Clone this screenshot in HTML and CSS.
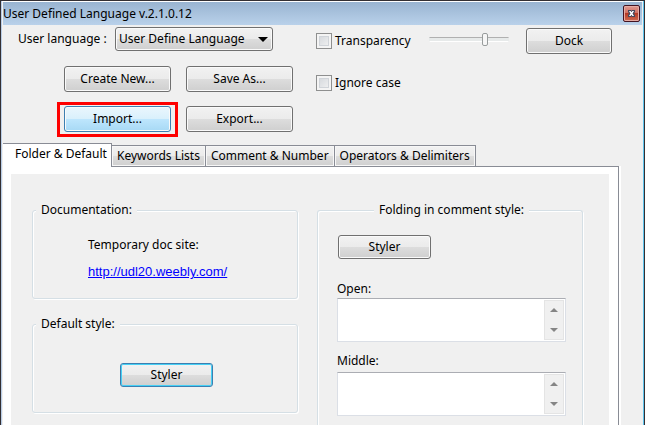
FILE: index.html
```html
<!DOCTYPE html>
<html lang="en">
<head>
<meta charset="utf-8">
<title>User Defined Language v.2.1.0.12</title>
<link rel="stylesheet" href="styles.css">
</head>
<body>
<div class="window">
  <header class="titlebar">
    <h1>User Defined Language v.2.1.0.12</h1>
    <button class="close" type="button" aria-label="Close">
      <svg width="7" height="7" viewBox="0 0 7 7"><path d="M0 0h3l.5 1L4 0h3v2L6 3.500 7 5v2H4l-.5-1L3 7H0V5l1-1.500L0 2z" fill="#45485c"/><path d="M1 1h1.600l.9 1.300L4.400 1H6L4.500 3.500 6 6H4.400L3.500 4.700 2.600 6H1l1.500-2.500z" fill="#fff"/></svg>
    </button>
  </header>

  <section class="toolbar">
    <div class="language">
      <div class="language-pick">
        <label for="lang">User language :</label>
        <div class="select-wrap">
          <select id="lang"><option>User Define Language</option></select>
          <svg class="caret" width="10" height="5" viewBox="0 0 10 5"><path d="M0 0h10L5 5z" fill="#000"/></svg>
        </div>
      </div>
      <div class="actions">
        <button class="btn" type="button">Create New...</button>
        <button class="btn" type="button">Save As...</button>
        <div class="marked"><button class="btn btn-hot" type="button">Import...</button></div>
        <button class="btn" type="button">Export...</button>
      </div>
    </div>
    <div class="checks">
      <label><input type="checkbox">Transparency</label>
      <label><input type="checkbox">Ignore case</label>
    </div>
    <input class="slider" type="range" min="0" max="100" value="72" aria-label="Transparency level">
    <button class="btn dock" type="button">Dock</button>
  </section>

  <nav class="tabs" role="tablist">
    <button class="tab tab-active" type="button" role="tab" aria-selected="true">Folder &amp; Default</button>
    <button class="tab" type="button" role="tab">Keywords Lists</button>
    <button class="tab" type="button" role="tab">Comment &amp; Number</button>
    <button class="tab" type="button" role="tab">Operators &amp; Delimiters</button>
  </nav>

  <main class="panel">
    <div class="page">
      <div class="column">
        <fieldset class="docs">
          <legend>Documentation:</legend>
          <p>Temporary doc site:</p>
          <a href="http://udl20.weebly.com/">http://udl20.weebly.com/</a>
        </fieldset>
        <fieldset class="default-style">
          <legend>Default style:</legend>
          <button class="btn styler btn-focus" type="button">Styler</button>
        </fieldset>
      </div>
      <fieldset class="folding">
        <legend>Folding in comment style:</legend>
        <button class="btn styler" type="button">Styler</button>
        <label for="open">Open:</label>
        <div class="memo">
          <textarea id="open"></textarea>
          <div class="scroll">
            <svg width="8" height="4" viewBox="0 0 8 4"><path d="M4 0l4 4H0z" fill="#858585"/></svg>
            <svg width="8" height="4" viewBox="0 0 8 4"><path d="M0 0h8L4 4z" fill="#858585"/></svg>
          </div>
        </div>
        <label for="middle">Middle:</label>
        <div class="memo">
          <textarea id="middle"></textarea>
          <div class="scroll">
            <svg width="8" height="4" viewBox="0 0 8 4"><path d="M4 0l4 4H0z" fill="#858585"/></svg>
            <svg width="8" height="4" viewBox="0 0 8 4"><path d="M0 0h8L4 4z" fill="#858585"/></svg>
          </div>
        </div>
      </fieldset>
    </div>
  </main>
</div>
</body>
</html>
```
FILE: styles.css
```css
* { box-sizing: border-box; }

body {
  margin: 0;
  background: #f0f0f0;
  color: #000;
  font: 12px/16px "Noto Sans", Tahoma, sans-serif;
}

button, select, input, textarea { font: inherit; color: inherit; margin: 0; }

.window {
  display: flex;
  flex-direction: column;
  min-height: 100vh;
  border-top: 1px solid #332f33;
  border-left: 1px solid #332f33;
  border-right: 1px solid #332f33;
  box-shadow: inset 1px 0 #b9cde6, inset -1px 0 #5fc3ec, inset 0 1px #fff;
  padding: 1px 2px 0;
}

.titlebar {
  display: flex;
  flex: none;
  align-items: center;
  justify-content: space-between;
  height: 23px;
  background: linear-gradient(#99b4d1, #b9d1ea);
}
.titlebar h1 { margin: 0; font-size: 12px; font-weight: normal; }

.close {
  display: grid;
  place-items: center;
  width: 17px;
  height: 17px;
  margin-right: 2px;
  padding: 0;
  border: 1px solid #431422;
  border-radius: 2px;
  background: linear-gradient(#e09a92, #cf6d5f 48%, #b53a26 50%, #cf6a50);
  box-shadow: inset 0 0 0 1px #e6aaa2;
}

.toolbar {
  display: flex;
  flex: none;
  align-items: flex-start;
  height: 118px;
  padding: 2px 30px 0 15px;
}
.language { width: 275px; flex: none; }
.language-pick { display: flex; align-items: center; justify-content: space-between; padding-right: 20px; }
.select-wrap { position: relative; display: flex; width: 158px; }
select {
  appearance: none;
  width: 100%;
  height: 24px;
  padding: 0 3px;
  border: 1px solid #707070;
  border-radius: 3px;
  background: linear-gradient(#f2f2f2, #ebebeb 50%, #dddddd 50%, #cfcfcf);
  box-shadow: inset 0 0 0 1px #fafafa;
}
.caret { position: absolute; right: 5px; top: 10px; pointer-events: none; }

.actions {
  display: grid;
  grid-template-columns: 107px 107px;
  gap: 14px 15px;
  margin: 15px 0 0 46px;
}

.btn {
  height: 26px;
  padding: 0;
  border: 1px solid #707070;
  border-radius: 3px;
  background: linear-gradient(#f2f2f2, #ebebeb 50%, #dddddd 50%, #cfcfcf);
  box-shadow: inset 0 0 0 1px #fafafa;
}
.btn-hot {
  width: 100%;
  border-color: #3c7fb1;
  background: linear-gradient(#eaf6fd, #d9f0fc 50%, #bee6fd 50%, #a7d9f5);
}
.btn-focus {
  border-color: #3c7fb1;
  box-shadow: inset 0 0 0 1px #46d0f5;
}
.marked { margin: -4px -7px -5px; padding: 1px 4px 2px; border: 3px solid #fe0000; }
.styler { width: 93px; height: 24px; }
.dock { width: 86px; margin: 1px 0 0 17px; }

.checks { display: grid; gap: 26px; margin: 6px 0 0 23px; width: 97px; flex: none; }
.checks label { display: flex; align-items: center; gap: 3px; white-space: nowrap; }
.checks input {
  appearance: none;
  width: 16px;
  height: 16px;
  border: 1px solid #8e8f8f;
  background: linear-gradient(135deg, #cfd3d8, #f6f6f6);
  box-shadow: inset 0 0 0 2px #f4f4f4, inset 0 0 0 3px #d0d4d9;
}

.slider {
  appearance: none;
  flex: 1;
  min-width: 60px;
  height: 16px;
  margin: 4px 0 0 16px;
  background: none;
}
.slider::-webkit-slider-runnable-track {
  height: 5px;
  border: 1px solid #e7eaea;
  border-top-color: #b0b0b0;
  border-bottom-color: #fff;
  background: #e7eaea;
}
.slider::-webkit-slider-thumb {
  appearance: none;
  width: 6px;
  height: 13px;
  margin-top: -5px;
  border: 1px solid #989c9c;
  border-radius: 2px;
  background: #f6f6f6;
}

.tabs { display: flex; flex: none; align-items: flex-end; }
.tab {
  height: 21px;
  padding: 0 5px;
  border: 1px solid #898c95;
  border-bottom: 0;
  background: linear-gradient(#f2f2f2, #ebebeb 50%, #dddddd 50%, #cfcfcf);
  box-shadow: inset 0 0 0 1px #f7f7f7;
  white-space: nowrap;
}
.tab + .tab { border-left-width: 0; }
.tab-active {
  position: relative;
  height: 24px;
  margin-bottom: -1px;
  padding: 0 4px 3px 12px;
  border-left: 0;
  background: #fff;
  box-shadow: none;
}

.panel {
  display: flex;
  flex: 1;
  margin-right: 23px;
  padding: 7px 9px 0 8px;
  border-top: 1px solid #898c95;
  border-right: 1px solid #898c95;
  background: #fff;
  box-shadow: 2px 0 #fff;
}
.page {
  display: grid;
  flex: 1;
  grid-template-columns: 1fr 1fr;
  gap: 19px;
  padding: 28px 26px 0 21px;
  background: #f0f0f0;
}

fieldset {
  min-width: 0;
  margin: 0;
  border: 1px solid #d5dfe5;
  border-radius: 3px;
  box-shadow: inset 1px 1px #fff, 1px 1px #fff;
}
legend { padding: 0 5px; background: #f0f0f0; }
.column { display: grid; align-content: start; gap: 17px; }
.docs { padding: 19px 0 18px 55px; }
.docs legend { margin-left: -52px; }
.docs p { margin: 0 0 11px; }
.docs a { display: block; font: 13px/16px "Liberation Sans", Arial, sans-serif; color: #0000ff; }
.default-style { padding: 31px 0 25px 3px; }
.default-style .btn { display: block; margin: 0 auto; }

.folding {
  display: flex;
  flex-direction: column;
  padding: 17px 16px 0 19px;
  border-bottom: 0;
  border-bottom-left-radius: 0;
  border-bottom-right-radius: 0;
}
.folding legend { margin: 0 auto; }
.folding .styler { margin-left: 1px; }
.folding label { margin: 22px 0 1px; }
.folding .memo + label { margin: 11px 0 3px; }
.memo {
  display: flex;
  flex: none;
  height: 44px;
  padding: 1px;
  border: 1px solid #dbdfe6;
  border-top-color: #abadb3;
  background: #fff;
}
textarea { flex: 1; min-width: 0; padding: 2px; border: 0; resize: none; outline: 0; overflow: hidden; }
.scroll {
  display: flex;
  flex-direction: column;
  align-items: center;
  justify-content: space-between;
  width: 20px;
  padding: 7px 0;
  border: 1px solid #e4e4e4;
  background: #f0f0f0;
}
```
